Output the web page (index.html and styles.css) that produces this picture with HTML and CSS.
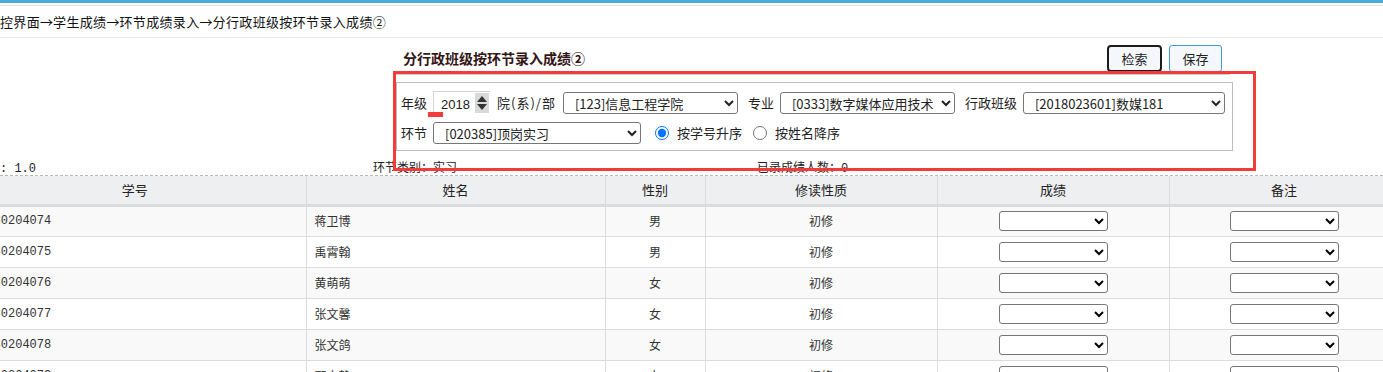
FILE: index.html
```html
<!DOCTYPE html>
<html lang="zh-CN">
<head>
    <meta charset="UTF-8" />
    <title>分行政班级按环节录入成绩②</title>
    <link rel="stylesheet" href="styles.css">
</head>
<body>
    <div class="top-bar"></div>
    <div class="crumb">控界面<span class="arr">→</span>学生成绩<span class="arr">→</span>环节成绩录入<span class="arr">→</span>分行政班级按环节录入成绩②</div>

    <div class="panel">
        <div class="toolbar">
            <div class="page-title">分行政班级按环节录入成绩②</div>
            <div class="actions">
                <button type="button" class="btn btn-focus">检索</button>
                <button type="button" class="btn">保存</button>
            </div>
        </div>
        <div class="rule"></div>

        <div class="filter">
            <div class="filter-row">
                <span class="lbl">年级</span>
                <span class="num-box">
                    <span class="num-val">2018</span>
                    <span class="spin"><i class="up"></i><i class="down"></i></span>
                </span>
                <span class="lbl lbl-dept">院(系)/部</span>
                <select class="sel sel-dept"><option>[123]信息工程学院</option></select>
                <span class="lbl lbl-gap">专业</span>
                <select class="sel sel-dept"><option>[0333]数字媒体应用技术</option></select>
                <span class="lbl lbl-gap">行政班级</span>
                <select class="sel sel-class"><option>[2018023601]数媒181</option></select>
            </div>
            <div class="filter-row">
                <span class="lbl">环节</span>
                <select class="sel sel-link"><option>[020385]顶岗实习</option></select>
                <label class="radio first"><input type="radio" name="order" checked>按学号升序</label>
                <label class="radio"><input type="radio" name="order">按姓名降序</label>
            </div>
        </div>
    </div>

    <div class="info">
        <span>: 1.0</span>
        <span>环节类别：实习</span>
        <span>已录成绩人数：0</span>
    </div>

    <div class="grid-wrap">
        <table class="grid">
            <colgroup>
                <col style="width:342px"><col style="width:299px"><col style="width:100px">
                <col style="width:232px"><col style="width:232px"><col style="width:230px">
            </colgroup>
            <thead>
                <tr><th>学号</th><th>姓名</th><th>性别</th><th>修读性质</th><th>成绩</th><th>备注</th></tr>
            </thead>
            <tbody>
                <tr><td class="id">20180204074</td><td>蒋卫博</td><td class="c">男</td><td class="c">初修</td><td class="c"><select class="cell-sel"></select></td><td class="c"><select class="cell-sel"></select></td></tr>
                <tr><td class="id">20180204075</td><td>禹霄翰</td><td class="c">男</td><td class="c">初修</td><td class="c"><select class="cell-sel"></select></td><td class="c"><select class="cell-sel"></select></td></tr>
                <tr><td class="id">20180204076</td><td>黄萌萌</td><td class="c">女</td><td class="c">初修</td><td class="c"><select class="cell-sel"></select></td><td class="c"><select class="cell-sel"></select></td></tr>
                <tr><td class="id">20180204077</td><td>张文馨</td><td class="c">女</td><td class="c">初修</td><td class="c"><select class="cell-sel"></select></td><td class="c"><select class="cell-sel"></select></td></tr>
                <tr><td class="id">20180204078</td><td>张文鸽</td><td class="c">女</td><td class="c">初修</td><td class="c"><select class="cell-sel"></select></td><td class="c"><select class="cell-sel"></select></td></tr>
                <tr><td class="id">20180204079</td><td>邵文静</td><td class="c">女</td><td class="c">初修</td><td class="c"><select class="cell-sel"></select></td><td class="c"><select class="cell-sel"></select></td></tr>
            </tbody>
        </table>
    </div>

    <!-- annotation marks drawn over the screenshot -->
    <div class="mark-box"></div>
    <div class="mark-line"></div>
</body>
</html>
```

FILE: styles.css
```css
* {
    box-sizing: border-box;
}

body {
    margin: 0;
    font-family: "Noto Sans CJK SC", "Noto Sans", sans-serif;
    font-size: 13px;
    color: #222;
    background: #fff;
    overflow: hidden;
}

.top-bar {
    height: 3px;
    background-color: #48acd9;
    margin-bottom: 2px;
}

.crumb {
    height: 33px;
    line-height: 31px;
    border-top: 1px solid #e6e6e6;
    border-bottom: 1px solid #e6e6e6;
    white-space: nowrap;
    letter-spacing: 0.35px;
    color: #111;
}

.crumb .arr {
    display: inline-block;
    width: 13px;
    text-align: center;
}

.panel {
    margin-left: 395px;
    width: 838px;
}

.toolbar {
    height: 36px;
    display: flex;
    justify-content: space-between;
    align-items: flex-start;
    padding: 0 11px 0 8px;
}

.page-title {
    margin-top: 10px;
    line-height: 20px;
    font-size: 14px;
    font-weight: bold;
    color: #331515;
}

.actions {
    display: flex;
    margin-top: 7px;
}

.btn {
    height: 27px;
    width: 53px;
    margin-left: 7px;
    padding: 0;
    font-family: inherit;
    font-size: 13px;
    color: #222;
    background-color: #f4f8fc;
    border: 1px solid #3d9bd8;
    border-radius: 3px;
}

.btn-focus {
    width: 55px;
    border: 2px solid #1c1c1c;
    border-radius: 4px;
}

.rule {
    border-top: 1px solid #cfcfcf;
    margin-right: 3px;
    margin-bottom: 7px;
}

.filter {
    margin-left: 1px;
    border: 1px solid #bcbcbc;
    padding: 8px 4px 6px 4px;
}

.filter-row {
    display: flex;
    align-items: center;
    height: 23px;
    white-space: nowrap;
}

.filter-row + .filter-row {
    margin-top: 7px;
}

.lbl {
    margin-right: 6px;
}

.lbl-dept {
    margin-left: 7px;
    margin-right: 7px;
    letter-spacing: 1px;
}

.lbl-gap {
    margin-left: 10px;
    margin-right: 6px;
}

.num-box {
    display: flex;
    align-items: center;
    width: 57px;
    height: 23px;
    border-top: 1px solid #d4d4d4;
    border-left: 1px solid #d4d4d4;
}

.num-val {
    flex: 1;
    padding-left: 7px;
    padding-top: 2px;
    font-family: "Liberation Sans", sans-serif;
    font-size: 13px;
}

.spin {
    display: flex;
    flex-direction: column;
    justify-content: space-between;
    align-items: center;
    width: 14px;
    height: 20px;
    margin-right: 1px;
    padding: 3px 0;
    background-color: #d9d9d9;
}

.spin i {
    width: 0;
    height: 0;
    border-left: 5px solid transparent;
    border-right: 5px solid transparent;
}

.spin .up {
    border-bottom: 6px solid #333;
}

.spin .down {
    border-top: 6px solid #333;
}

.sel {
    height: 22px;
    padding: 0 4px 0 7px;
    font-family: "Noto Sans CJK SC", sans-serif;
    font-size: 13px;
    color: #222;
    background-color: #fff;
    border: 1px solid #767676;
    border-radius: 3px;
}

.sel-dept {
    width: 175px;
}

.sel-class {
    width: 202px;
}

.sel-link {
    width: 208px;
}

.radio {
    display: flex;
    align-items: center;
    margin-left: 11px;
}

.radio.first {
    margin-left: 14px;
}

.radio input {
    width: 14px;
    height: 14px;
    margin: 0 8px 0 0;
}

.info {
    display: grid;
    grid-template-columns: 373px 384px auto;
    height: 23px;
    padding-top: 9px;
    line-height: 14px;
    font-family: "Liberation Mono", "Noto Sans CJK SC", monospace;
    font-size: 12px;
    color: #222;
    border-bottom: 1px dashed #b8b8b8;
    margin-top: 2px;
    overflow: hidden;
}

.grid-wrap {
    overflow: hidden;
}

.grid {
    margin-left: -36px;
    width: 1435px;
    table-layout: fixed;
    border-collapse: collapse;
    font-family: "Liberation Mono", "Noto Sans CJK SC", monospace;
    font-size: 12px;
}

.grid th {
    height: 29px;
    padding: 0;
    font-family: "Noto Sans CJK SC", sans-serif;
    font-size: 13px;
    font-weight: normal;
    color: #222;
    background-color: #eeeff1;
    border-right: 1px solid #dcdcdc;
    border-bottom: 3px solid #dcdcdc;
}

.grid td {
    height: 31px;
    padding: 0 8px;
    color: #333;
    border-right: 1px solid #dcdcdc;
    border-bottom: 1px solid #dcdcdc;
    white-space: nowrap;
    overflow: hidden;
}

.grid tbody tr:nth-child(odd) {
    background-color: #f9f9f9;
}

.grid td.c {
    text-align: center;
}

.cell-sel {
    width: 109px;
    height: 20px;
    vertical-align: middle;
    background-color: #fff;
    border: 1px solid #767676;
    border-radius: 3px;
}

.mark-box {
    position: absolute;
    left: 393px;
    top: 71px;
    width: 863px;
    height: 100px;
    border: 3px solid #f23b3c;
}

.mark-line {
    position: absolute;
    left: 428px;
    top: 112px;
    width: 15px;
    height: 5px;
    background-color: #f23b3c;
}
```
